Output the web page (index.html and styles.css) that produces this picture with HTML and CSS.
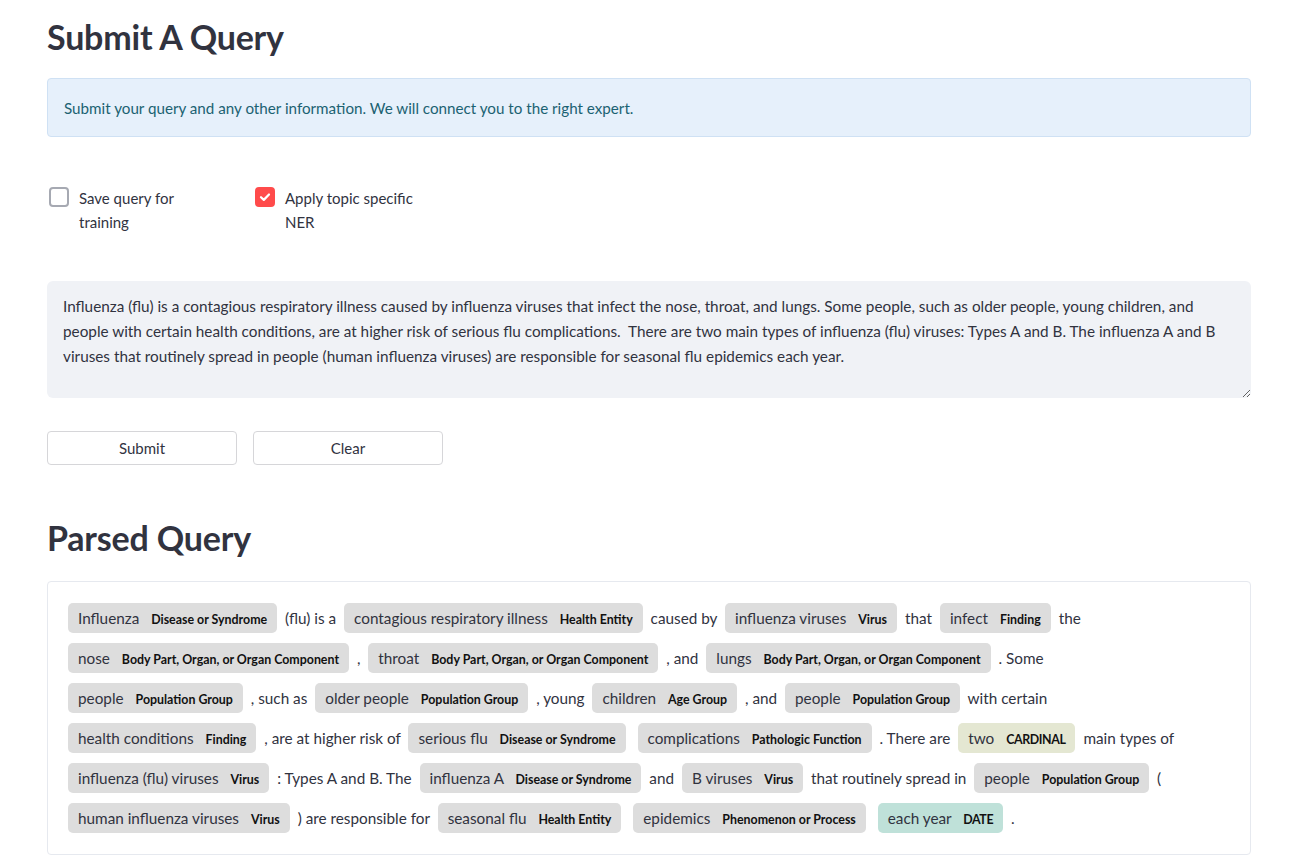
FILE: index.html
```html
<!DOCTYPE html>
<html lang="en">
<head>
<meta charset="utf-8">
<title>Submit A Query</title>
<link rel="stylesheet" href="styles.css">
</head>
<body>
<main class="page">
  <h1 class="title title-first">Submit A Query</h1>
  <div class="info">Submit your query and any other information. We will connect you to the right expert.</div>

  <div class="cols checks">
    <label class="check">
      <span class="box"></span>
      <span class="check-text">Save query for training</span>
    </label>
    <label class="check">
      <span class="box checked"><svg viewBox="0 0 20 20" width="20" height="20"><path d="M5 10.3 L8.5 13.6 L15 6.9" fill="none" stroke="#fff" stroke-width="2.8" stroke-linecap="round" stroke-linejoin="round"/></svg></span>
      <span class="check-text">Apply topic specific NER</span>
    </label>
  </div>

  <textarea class="query" spellcheck="false">Influenza (flu) is a contagious respiratory illness caused by influenza viruses that infect the nose, throat, and lungs. Some people, such as older people, young children, and people with certain health conditions, are at higher risk of serious flu complications.  There are two main types of influenza (flu) viruses: Types A and B. The influenza A and B viruses that routinely spread in people (human influenza viruses) are responsible for seasonal flu epidemics each year.</textarea>

  <div class="cols buttons">
    <button class="btn" type="button">Submit</button>
    <button class="btn" type="button">Clear</button>
  </div>

  <h1 class="title title-second">Parsed Query</h1>
  <div class="parsed">
    <div class="entities">
      <mark class="ent">Influenza <span class="lbl">Disease or Syndrome</span></mark> (flu) is a <mark class="ent">contagious respiratory illness <span class="lbl">Health Entity</span></mark> caused by <mark class="ent">influenza viruses <span class="lbl">Virus</span></mark> that <mark class="ent">infect <span class="lbl">Finding</span></mark> the <br>
      <mark class="ent">nose <span class="lbl">Body Part, Organ, or Organ Component</span></mark> , <mark class="ent">throat <span class="lbl">Body Part, Organ, or Organ Component</span></mark> , and <mark class="ent">lungs <span class="lbl">Body Part, Organ, or Organ Component</span></mark> . Some <br>
      <mark class="ent">people <span class="lbl">Population Group</span></mark> , such as <mark class="ent">older people <span class="lbl">Population Group</span></mark> , young <mark class="ent">children <span class="lbl">Age Group</span></mark> , and <mark class="ent">people <span class="lbl">Population Group</span></mark> with certain <br>
      <mark class="ent">health conditions <span class="lbl">Finding</span></mark> , are at higher risk of <mark class="ent">serious flu <span class="lbl">Disease or Syndrome</span></mark> <mark class="ent">complications <span class="lbl">Pathologic Function</span></mark> . There are <mark class="ent cardinal">two <span class="lbl caps">CARDINAL</span></mark> main types of <br>
      <mark class="ent">influenza (flu) viruses <span class="lbl">Virus</span></mark> : Types A and B. The <mark class="ent">influenza A <span class="lbl">Disease or Syndrome</span></mark> and <mark class="ent">B viruses <span class="lbl">Virus</span></mark> that routinely spread in <mark class="ent">people <span class="lbl">Population Group</span></mark> ( <br>
      <mark class="ent">human influenza viruses <span class="lbl">Virus</span></mark> ) are responsible for <mark class="ent">seasonal flu <span class="lbl">Health Entity</span></mark> <mark class="ent">epidemics <span class="lbl">Phenomenon or Process</span></mark> <mark class="ent date">each year <span class="lbl caps">DATE</span></mark> .
    </div>
  </div>
</main>
</body>
</html>
```

FILE: styles.css
```css
* { box-sizing: border-box; }

html, body {
  margin: 0;
  padding: 0;
  background: #ffffff;
}

body {
  font-family: Lato, "Noto Sans", "Liberation Sans", sans-serif;
  font-size: 16px;
  color: #31333f;
}

.page {
  width: 1204px;
  margin-left: 47px;
  padding-bottom: 40px;
}

.title {
  font-size: 34px;
  font-weight: 700;
  line-height: 44px;
  height: 44px;
  margin: 0;
  color: #31333f;
  letter-spacing: -0.2px;
}

.title-first { margin-top: 15px; margin-bottom: 19px; }
.title-second { margin-top: 51px; margin-bottom: 21px; }

.info {
  background: #e6f0fb;
  border: 1px solid #cfe1f4;
  border-radius: 4px;
  padding: 16px;
  line-height: 27px;
  height: 59px;
  color: #1b6272;
  font-size: 15.2px;
}

.cols {
  display: flex;
  gap: 16px;
}

.checks {
  margin-top: 49px;
  height: 48px;
}

.check {
  width: 190px;
  display: flex;
  align-items: flex-start;
  gap: 10px;
  padding-left: 2px;
  line-height: 24px;
  font-size: 15px;
}

.box {
  flex: none;
  width: 20px;
  height: 20px;
  margin-top: 1px;
  border: 2px solid #a6a9b2;
  border-radius: 4px;
  display: flex;
  align-items: center;
  justify-content: center;
}

.box svg { display: block; }

.box.checked {
  background: #ff4b4b;
  border-color: #ff4b4b;
}

.check-text {
  width: 140px;
}

.query {
  display: block;
  width: 1204px;
  height: 117px;
  margin-top: 47px;
  padding: 13px 16px 12px;
  border: none;
  border-radius: 6px;
  background: #f0f2f6;
  color: #31333f;
  font-family: inherit;
  font-size: 15.3px;
  line-height: 25px;
  resize: vertical;
  outline: none;
}

.buttons {
  margin-top: 33px;
}

.btn {
  width: 190px;
  height: 34px;
  background: #ffffff;
  border: 1px solid #d6d6d9;
  border-radius: 4px;
  font-family: inherit;
  font-size: 15px;
  color: #31333f;
  padding: 0;
}

.parsed {
  border: 1px solid #e6e9ef;
  border-radius: 4px;
  padding: 16px;
}

.entities {
  line-height: 40px;
  color: #31333f;
  font-size: 15.3px;
}

.ent {
  display: inline-block;
  background: #dddddd;
  color: #31333f;
  padding: 7px 10px;
  margin: 0 4px;
  line-height: 16px;
  border-radius: 5px;
}

.ent.cardinal { background: #e4e7d2; }
.ent.date { background: #bfe1d9; }

.lbl {
  font-size: 12.4px;
  font-weight: 700;
  line-height: 1;
  vertical-align: middle;
  margin-left: 8px;
  color: #111111;
}

.lbl.caps {
  letter-spacing: -0.4px;
}
```
